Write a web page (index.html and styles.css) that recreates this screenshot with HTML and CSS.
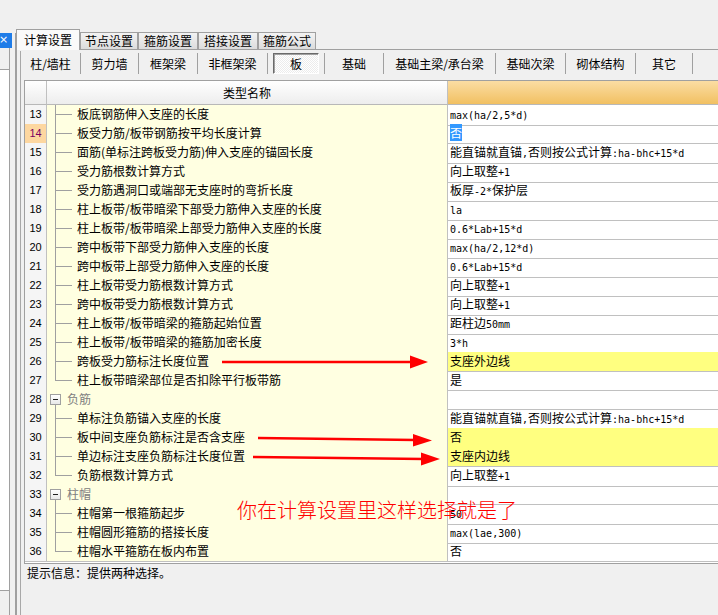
FILE: index.html
```html
<!DOCTYPE html>
<html lang="zh-CN">
<head>
<meta charset="utf-8">
<title>计算设置</title>
<link rel="stylesheet" href="styles.css">
</head>
<body>
<div class="app">
  <div class="side">
    <div class="side-top"></div>
    <div class="side-body">
      <div class="close">×</div>
      <div class="side-bar"></div>
      <div class="side-list"></div>
      <div class="side-foot"></div>
    </div>
  </div>
  <div class="tabctl">
    <div class="tabs">
      <div class="tab active w64">计算设置</div>
      <div class="tab w58">节点设置</div>
      <div class="tab w60">箍筋设置</div>
      <div class="tab w60">搭接设置</div>
      <div class="tab w58">箍筋公式</div>
    </div>
    <div class="page">
      <div class="inner">
        <div class="toolbar">
          <div class="tb w60">柱/墙柱</div>
          <div class="tb w58">剪力墙</div>
          <div class="tb w59">框架梁</div>
          <div class="tb w70">非框架梁</div>
          <div class="tb w57"><div class="pressed">板</div></div>
          <div class="tb w59">基础</div>
          <div class="tb w112">基础主梁/承台梁</div>
          <div class="tb w70">基础次梁</div>
          <div class="tb w70">砌体结构</div>
          <div class="tb w57">其它</div>
        </div>
        <div class="grid">
          <div class="hdr">
            <div class="hn"></div>
            <div class="hc">类型名称</div>
            <div class="hv"></div>
          </div>
          <div class="r"><div class="n">13</div><div class="c"><span class="t"></span>板底钢筋伸入支座的长度</div><div class="v"><span class="m">max(ha/2,5*d)</span></div></div>
          <div class="r"><div class="n cur">14</div><div class="c"><span class="t"></span>板受力筋/板带钢筋按平均长度计算</div><div class="v"><span class="sel">否</span></div></div>
          <div class="r"><div class="n">15</div><div class="c"><span class="t"></span>面筋(单标注跨板受力筋)伸入支座的锚固长度</div><div class="v">能直锚就直锚<span class="m">,</span>否则按公式计算<span class="m">:ha-bhc+15*d</span></div></div>
          <div class="r"><div class="n">16</div><div class="c"><span class="t"></span>受力筋根数计算方式</div><div class="v">向上取整<span class="m">+1</span></div></div>
          <div class="r"><div class="n">17</div><div class="c"><span class="t"></span>受力筋遇洞口或端部无支座时的弯折长度</div><div class="v">板厚<span class="m">-2*</span>保护层</div></div>
          <div class="r"><div class="n">18</div><div class="c"><span class="t"></span>柱上板带/板带暗梁下部受力筋伸入支座的长度</div><div class="v"><span class="m">la</span></div></div>
          <div class="r"><div class="n">19</div><div class="c"><span class="t"></span>柱上板带/板带暗梁上部受力筋伸入支座的长度</div><div class="v"><span class="m">0.6*Lab+15*d</span></div></div>
          <div class="r"><div class="n">20</div><div class="c"><span class="t"></span>跨中板带下部受力筋伸入支座的长度</div><div class="v"><span class="m">max(ha/2,12*d)</span></div></div>
          <div class="r"><div class="n">21</div><div class="c"><span class="t"></span>跨中板带上部受力筋伸入支座的长度</div><div class="v"><span class="m">0.6*Lab+15*d</span></div></div>
          <div class="r"><div class="n">22</div><div class="c"><span class="t"></span>柱上板带受力筋根数计算方式</div><div class="v">向上取整<span class="m">+1</span></div></div>
          <div class="r"><div class="n">23</div><div class="c"><span class="t"></span>跨中板带受力筋根数计算方式</div><div class="v">向上取整<span class="m">+1</span></div></div>
          <div class="r"><div class="n">24</div><div class="c"><span class="t"></span>柱上板带/板带暗梁的箍筋起始位置</div><div class="v">距柱边<span class="m">50mm</span></div></div>
          <div class="r"><div class="n">25</div><div class="c"><span class="t"></span>柱上板带/板带暗梁的箍筋加密长度</div><div class="v"><span class="m">3*h</span></div></div>
          <div class="r"><div class="n">26</div><div class="c"><span class="t"></span>跨板受力筋标注长度位置</div><div class="v hl">支座外边线</div></div>
          <div class="r"><div class="n">27</div><div class="c"><span class="t end"></span>柱上板带暗梁部位是否扣除平行板带筋</div><div class="v">是</div></div>
          <div class="r"><div class="n">28</div><div class="c"><span class="g"><span class="box"></span></span><span class="gt">负筋</span></div><div class="v"></div></div>
          <div class="r"><div class="n">29</div><div class="c"><span class="t"></span>单标注负筋锚入支座的长度</div><div class="v">能直锚就直锚<span class="m">,</span>否则按公式计算<span class="m">:ha-bhc+15*d</span></div></div>
          <div class="r"><div class="n">30</div><div class="c"><span class="t"></span>板中间支座负筋标注是否含支座</div><div class="v hl">否</div></div>
          <div class="r"><div class="n">31</div><div class="c"><span class="t"></span>单边标注支座负筋标注长度位置</div><div class="v hl">支座内边线</div></div>
          <div class="r"><div class="n">32</div><div class="c"><span class="t end"></span>负筋根数计算方式</div><div class="v">向上取整<span class="m">+1</span></div></div>
          <div class="r"><div class="n">33</div><div class="c"><span class="g"><span class="box"></span></span><span class="gt">柱帽</span></div><div class="v"></div></div>
          <div class="r"><div class="n">34</div><div class="c"><span class="t"></span>柱帽第一根箍筋起步</div><div class="v"><span class="m">50</span></div></div>
          <div class="r"><div class="n">35</div><div class="c"><span class="t"></span>柱帽圆形箍筋的搭接长度</div><div class="v"><span class="m">max(lae,300)</span></div></div>
          <div class="r"><div class="n">36</div><div class="c"><span class="t end"></span>柱帽水平箍筋在板内布置</div><div class="v">否</div></div>
          <div class="fill"></div>
        </div>
        <div class="hint">提示信息：提供两种选择。</div>
      </div>
    </div>
  </div>
</div>
<div class="overlay">
  <svg class="arrows" width="718" height="615" viewBox="0 0 718 615">
    <g fill="#ff0000" stroke="#ff0000">
      <line x1="222" y1="362" x2="412" y2="362" stroke-width="2.5"/>
      <polygon points="410,355.5 428,362 410,368.5" stroke="none"/>
      <line x1="258" y1="438" x2="416" y2="440" stroke-width="2.5"/>
      <polygon points="413,434 432,440.5 413,446.5" stroke="none"/>
      <line x1="253" y1="457" x2="424" y2="459" stroke-width="2.5"/>
      <polygon points="421,452.5 440,459 421,465.5" stroke="none"/>
    </g>
  </svg>
  <div class="note">你在计算设置里这样选择就是了</div>
</div>
</body>
</html>
```

FILE: styles.css
```css
html, body {
  margin: 0;
  padding: 0;
}
body {
  width: 718px;
  height: 615px;
  overflow: hidden;
  position: relative;
  background: #f0f0f0;
  font-family: "Noto Sans CJK SC", "Liberation Sans", sans-serif;
  font-size: 12px;
  color: #000;
}
.app {
  display: flex;
  height: 615px;
  overflow: hidden;
}

/* left strip */
.side {
  width: 16px;
  flex: none;
  display: flex;
  flex-direction: column;
}
.side-top { height: 33px; flex: none; }
.side-body {
  flex: 1;
  border-right: 1px solid #a0a0a0;
  display: flex;
  flex-direction: column;
}
.close {
  width: 12px;
  height: 15px;
  background: #1e7ce8;
  color: #fff;
  font-family: "DejaVu Sans", sans-serif;
  font-size: 11px;
  line-height: 14px;
  text-indent: -1px;
}
.side-bar {
  width: 9px;
  height: 21px;
  border-right: 1px solid #a0a0a0;
}
.side-list {
  width: 9px;
  height: 520px;
  background: #fff;
  border-top: 1px solid #a0a0a0;
  border-right: 1px solid #a0a0a0;
  border-bottom: 1px solid #a0a0a0;
}
.side-foot {
  width: 9px;
  flex: 1;
  border-right: 1px solid #a0a0a0;
}

/* tab control */
.tabctl {
  flex: 1;
  min-width: 0;
  display: flex;
  flex-direction: column;
  overflow: hidden;
}
.tabs {
  display: flex;
  align-items: flex-end;
  height: 20px;
  margin-top: 29px;
  position: relative;
  z-index: 1;
}
.tab {
  box-sizing: border-box;
  height: 17px;
  border: 1px solid #a0a0a0;
  border-bottom: none;
  background: linear-gradient(#f3f3f3, #dcdcdc);
  text-align: center;
  line-height: 16px;
  white-space: nowrap;
}
.tab.active {
  height: 21px;
  margin-bottom: -1px;
  background: #fafafa;
  line-height: 20px;
}
.w57 { width: 57px; }
.w58 { width: 58px; }
.w59 { width: 59px; }
.w60 { width: 60px; }
.w64 { width: 64px; }
.w70 { width: 70px; }
.w112 { width: 112px; }

.page {
  flex: 1;
  width: 760px;
  border-top: 1px solid #a0a0a0;
  border-left: 1px solid #a0a0a0;
  padding: 1px 0 0 3px;
}
.inner {
  height: 100%;
  border-left: 1px solid #a8a8a8;
  padding-top: 2px;
  box-sizing: border-box;
}

/* toolbar */
.toolbar {
  display: flex;
  height: 21px;
}
.tb {
  box-sizing: border-box;
  height: 21px;
  border-right: 1px solid #a0a0a0;
  text-align: center;
  line-height: 21px;
  white-space: nowrap;
  flex: none;
}
.pressed {
  box-sizing: border-box;
  height: 21px;
  margin: 0 5px;
  border: 1px solid;
  border-color: #6a6a6a #ffffff #ffffff #6a6a6a;
  box-shadow: inset 1px 1px 0 #a0a0a0;
  background: repeating-conic-gradient(#ffffff 0 25%, #ececec 0 50%) 0 0 / 2px 2px;
  line-height: 19px;
}

/* grid */
.grid {
  margin: 6px 0 0 3px;
  border: 1px solid #a0a0a0;
  border-right: none;
  background: #fff;
}
.hdr {
  display: grid;
  grid-template-columns: 22px 401px 1fr;
  height: 24px;
}
.hdr > div {
  box-sizing: border-box;
  border-bottom: 1px solid #b8b8b8;
}
.hn {
  border-right: 1px solid #c0c0c0;
  background: linear-gradient(#ffffff, #ececec);
}
.hc {
  border-right: 1px solid #c0c0c0;
  background: linear-gradient(#ffffff, #ededed);
  text-align: center;
  line-height: 23px;
}
.hv {
  background: linear-gradient(#fbdda3, #f1c062);
}
.r {
  display: grid;
  grid-template-columns: 22px 401px 1fr;
  height: 19px;
}
.r > div {
  box-sizing: border-box;
  border-bottom: 1px solid #c0c0c0;
  white-space: nowrap;
  overflow: visible;
}
.n {
  border-right: 1px solid #c0c0c0;
  background: #f5f5f5;
  text-align: center;
  font-family: "Liberation Sans", sans-serif;
  font-size: 11px;
  line-height: 18px;
}
.n.cur {
  background: #fdd7a0;
  color: #7a0060;
}
.c {
  border-right: 1px solid #c0c0c0;
  background: #ffffe1;
  display: flex;
  align-items: flex-start;
  line-height: 18px;
}
.v {
  padding-left: 2px;
  line-height: 18px;
}
.v.hl { background: #ffff80; }
.m {
  font-family: "DejaVu Sans Mono", "Liberation Mono", monospace;
  font-size: 10px;
}
.sel {
  background: #3399ff;
  color: #fff;
}

/* tree lines */
.t {
  flex: none;
  width: 30px;
  height: 19px;
  background:
    linear-gradient(#a0a0a0, #a0a0a0) 8px 0 / 1px 100% no-repeat,
    linear-gradient(#a0a0a0, #a0a0a0) 8px 9px / 17px 1px no-repeat;
}
.t.end {
  background:
    linear-gradient(#a0a0a0, #a0a0a0) 8px 0 / 1px 10px no-repeat,
    linear-gradient(#a0a0a0, #a0a0a0) 8px 9px / 17px 1px no-repeat;
}
.g {
  flex: none;
  width: 20px;
  height: 19px;
  padding-top: 4px;
  box-sizing: border-box;
  background: linear-gradient(#a0a0a0, #a0a0a0) 8px 15px / 1px 4px no-repeat;
}
.box {
  box-sizing: border-box;
  display: flex;
  align-items: center;
  justify-content: center;
  width: 11px;
  height: 11px;
  margin-left: 3px;
  border: 1px solid #a0a0a0;
  background: linear-gradient(#ffffff, #e8e8e8);
}
.box::before {
  content: "";
  width: 5px;
  height: 1px;
  background: #202020;
}
.gt { color: #808080; }
.fill { height: 2px; }

.hint {
  margin-top: 1px;
  padding-left: 6px;
  line-height: 16px;
}

/* annotations drawn over the screenshot */
.overlay {
  position: absolute;
  left: 0;
  top: 0;
  width: 718px;
  height: 615px;
  pointer-events: none;
}
.arrows {
  display: block;
}
.note {
  position: absolute;
  left: 237px;
  top: 498px;
  color: #ff0000;
  font-size: 20px;
  line-height: 24px;
  white-space: nowrap;
  font-weight: 300;
}
```
